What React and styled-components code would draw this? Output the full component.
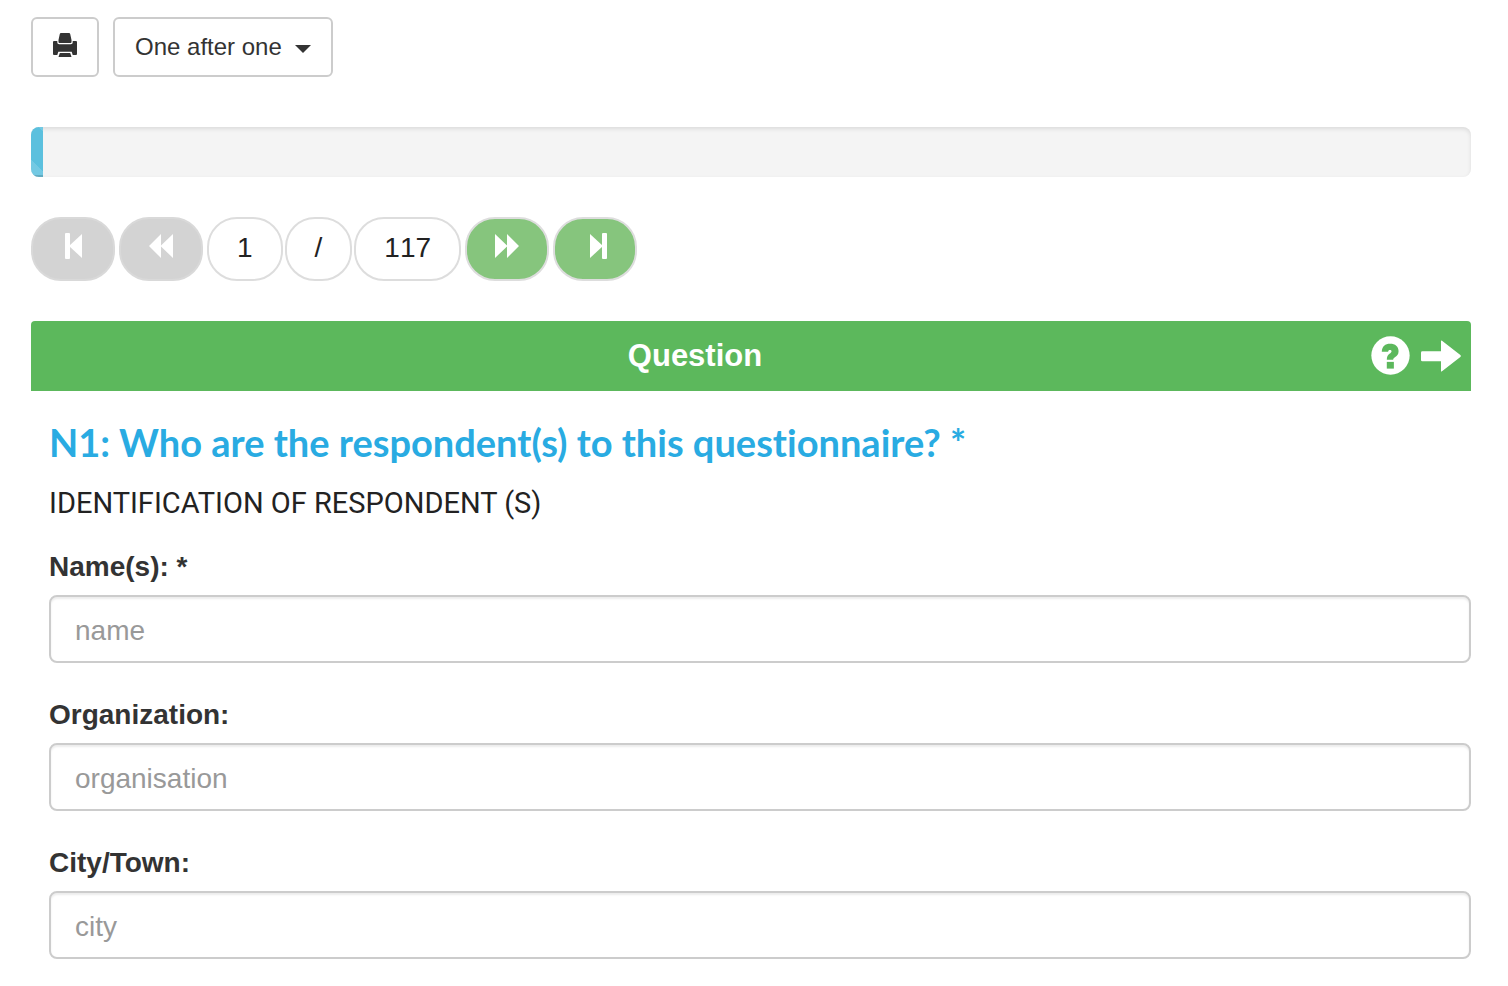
import React, { useState } from "react";
import styled, { createGlobalStyle } from "styled-components";

const GlobalStyle = createGlobalStyle`
  * {
    box-sizing: border-box;
  }

  body {
    margin: 0;
    background-color: #fff;
    color: #333;
    font-family: "Liberation Sans", Arial, sans-serif;
    font-size: 28px;
    line-height: 40px;
  }
`;

const Page = styled.main`
  padding: 17px 37px 27px 31px;
`;

const Toolbar = styled.div`
  display: flex;
  gap: 14px;
  margin-bottom: 50px;
`;

const ToolButton = styled.button`
  display: flex;
  align-items: center;
  justify-content: center;
  width: 68px;
  height: 60px;
  padding: 0;
  background-color: #fff;
  color: #333;
  border: 2px solid #ccc;
  border-radius: 6px;
  cursor: pointer;

  &:hover {
    background-color: #e6e6e6;
  }
`;

const ModeWrapper = styled.div`
  position: relative;
`;

const ModeSelect = styled.select`
  appearance: none;
  width: 220px;
  height: 60px;
  padding: 0 48px 2px 20px;
  background-color: #fff;
  color: #333;
  border: 2px solid #ccc;
  border-radius: 6px;
  font-family: inherit;
  font-size: 24px;
  cursor: pointer;
`;

const Caret = styled.svg`
  position: absolute;
  top: 28px;
  right: 22px;
  pointer-events: none;
`;

const Progress = styled.div`
  height: 50px;
  margin-bottom: 40px;
  overflow: hidden;
  background-color: #f4f4f4;
  border-radius: 8px;
  box-shadow: inset 0 2px 4px rgba(0, 0, 0, 0.1);
`;

const ProgressBar = styled.div`
  height: 100%;
  background-color: #5bc0de;
  background-image: linear-gradient(
    45deg,
    rgba(255, 255, 255, 0.15) 25%,
    transparent 25%,
    transparent 50%,
    rgba(255, 255, 255, 0.15) 50%,
    rgba(255, 255, 255, 0.15) 75%,
    transparent 75%
  );
  background-position: 0 -8px;
  background-size: 80px 80px;
  box-shadow: inset 0 -2px 0 rgba(0, 0, 0, 0.15);
`;

const Pager = styled.nav`
  display: flex;
  gap: 4px;
  margin-bottom: 40px;
`;

const PageCount = styled.div`
  display: flex;
  gap: 2px;
`;

const PageCell = styled.span`
  height: 64px;
  padding: 0 28px;
  color: #222;
  border: 2px solid #ddd;
  border-radius: 30px;
  font-kerning: none;
  line-height: 58px;
`;

const PageButton = styled.button`
  display: flex;
  align-items: center;
  justify-content: center;
  width: 84px;
  height: 64px;
  padding: 0;
  background-color: #86c57d;
  color: #fff;
  border: 2px solid #ddd;
  border-radius: 30px;
  cursor: pointer;

  &:disabled {
    background-color: #d3d3d3;
    border-color: #d9d9d9;
    cursor: not-allowed;
  }
`;

const PanelHeader = styled.header`
  display: flex;
  align-items: center;
  height: 70px;
  padding-bottom: 1px;
  background-color: #5cb85c;
  color: #fff;
  border-radius: 4px 4px 0 0;
`;

const PanelTitle = styled.h2`
  flex: 1;
  margin: 0;
  font-size: 31px;
  text-align: center;
`;

const PanelActions = styled.div`
  display: flex;
  align-items: center;
  gap: 11px;
  padding: 0 10px 0 12px;
`;

const PanelButton = styled.button`
  display: flex;
  padding: 0;
  background: none;
  color: inherit;
  border: none;
  cursor: pointer;
`;

const Question = styled.form`
  padding: 27px 0 0 18px;
`;

const QuestionTitle = styled.h3`
  margin: 0 0 15px;
  color: #29abe2;
  font-family: Lato, "Open Sans", sans-serif;
  font-size: 38px;
  font-variant-ligatures: none;
  font-weight: 700;
  line-height: 48px;
`;

const QuestionIntro = styled.p`
  margin: 0 0 22px;
  color: #222;
  font-family: Roboto, sans-serif;
  font-size: 29px;
  font-weight: 400;
  line-height: 44px;
`;

const Field = styled.div`
  margin-bottom: 32px;

  &:last-child {
    margin-bottom: 0;
  }
`;

const Label = styled.label`
  display: block;
  margin-bottom: 8px;
  font-weight: bold;
`;

const Input = styled.input`
  display: block;
  width: 100%;
  height: 68px;
  padding: 4px 24px 0;
  background-color: #fff;
  color: #555;
  border: 2px solid #ccc;
  border-radius: 8px;
  box-shadow: inset 0 2px 2px rgba(0, 0, 0, 0.075);
  font-family: inherit;
  font-size: 28px;

  &::placeholder {
    color: #999;
  }

  &:focus {
    border-color: #66afe9;
    outline: none;
  }
`;

const PrintIcon = () => (
  <svg width="24" height="28" viewBox="0 0 24 28" fill="currentColor" aria-hidden="true">
    <path d="M8 0h8q1 0 1.200 1L18.500 7v2q0 1-1 1h-11q-1 0-1-1V7L6.800 1Q7 0 8 0z" />
    <path d="M1 8h3.300v1.500q0 1.800 1.800 1.800h11.800q1.800 0 1.800-1.800V8H23q1 0 1 1v12q0 1-1 1h-3.300l-1-3.200H5.300l-1 3.200H1q-1 0-1-1V9q0-1 1-1z" />
    <path d="M6.800 20h10.400l1.300 4h-13z" />
  </svg>
);

const PagerIcon = ({ name }) => (
  <svg width="28" height="32" viewBox="0 0 28 32" fill="currentColor" aria-hidden="true">
    {name === "first" && (
      <>
        <rect x="6" y="0" width="5" height="26" rx="1" />
        <path d="M10 13 23 1v24z" />
      </>
    )}
    {name === "previous" && <path d="M2 13 14 1v11.500L26 1v24L14 13.500V25z" />}
    {name === "next" && <path d="M26 13 14 1v11.500L2 1v24l12-11.500V25z" />}
    {name === "last" && (
      <>
        <rect x="21" y="0" width="5" height="26" rx="1" />
        <path d="M22 13 9 1v24z" />
      </>
    )}
  </svg>
);

const HelpIcon = () => (
  <svg width="39" height="39" viewBox="0 0 116 116" aria-hidden="true">
    <circle cx="58" cy="58" r="57" fill="currentColor" />
    <g fill="#5cb85c">
      <path d="M32 47C33 30 42 23 57 23s25 8 25 22c0 10-5 14-11 18-4 3-5 4-5 8H47c0-10 3-14 8-18 4-3 6-5 6-7 0-3-2-4-5-4-3 0-5 2-5 5z" />
      <rect x="47" y="77" width="21" height="20" />
    </g>
  </svg>
);

const ArrowIcon = () => (
  <svg width="40" height="32" viewBox="0 0 120 96" fill="currentColor" aria-hidden="true">
    <path d="M4 34h56V3q0-3 3-1l55 43q3 3 0 6L63 94q-3 2-3-1V64H4q-4 0-4-4V38q0-4 4-4z" />
  </svg>
);

const TOTAL = 117;

const fields = [
  { id: "name", label: "Name(s): *", placeholder: "name", required: true },
  { id: "organisation", label: "Organization:", placeholder: "organisation" },
  { id: "city", label: "City/Town:", placeholder: "city" },
];

const App = () => {
  const [current, setCurrent] = useState(1);
  const [mode, setMode] = useState("one");

  const next = () => setCurrent(Math.min(TOTAL, current + 1));
  const isFirst = current === 1;
  const isLast = current === TOTAL;

  return (
    <>
      <GlobalStyle />
      <Page>
        <Toolbar>
          <ToolButton type="button" aria-label="Print" onClick={() => window.print()}>
            <PrintIcon />
          </ToolButton>
          <ModeWrapper>
            <ModeSelect
              aria-label="Display mode"
              value={mode}
              onChange={(e) => setMode(e.target.value)}
            >
              <option value="one">One after one</option>
              <option value="all">All</option>
            </ModeSelect>
            <Caret width="16" height="8" viewBox="0 0 16 8" fill="#333" aria-hidden="true">
              <path d="M0 0h16L8 8z" />
            </Caret>
          </ModeWrapper>
        </Toolbar>

        <Progress role="progressbar" aria-label="Progress" aria-valuenow={current} aria-valuemax={TOTAL}>
          <ProgressBar style={{ width: `${(current / TOTAL) * 100}%` }} />
        </Progress>

        <Pager aria-label="Questions">
          <PageButton type="button" aria-label="First" disabled={isFirst} onClick={() => setCurrent(1)}>
            <PagerIcon name="first" />
          </PageButton>
          <PageButton type="button" aria-label="Previous" disabled={isFirst} onClick={() => setCurrent(current - 1)}>
            <PagerIcon name="previous" />
          </PageButton>
          <PageCount>
            <PageCell>{current}</PageCell>
            <PageCell>/</PageCell>
            <PageCell>{TOTAL}</PageCell>
          </PageCount>
          <PageButton type="button" aria-label="Next" disabled={isLast} onClick={next}>
            <PagerIcon name="next" />
          </PageButton>
          <PageButton type="button" aria-label="Last" disabled={isLast} onClick={() => setCurrent(TOTAL)}>
            <PagerIcon name="last" />
          </PageButton>
        </Pager>

        <section>
          <PanelHeader>
            <PanelTitle>Question</PanelTitle>
            <PanelActions>
              <PanelButton type="button" aria-label="Help">
                <HelpIcon />
              </PanelButton>
              <PanelButton type="button" aria-label="Next question" onClick={next}>
                <ArrowIcon />
              </PanelButton>
            </PanelActions>
          </PanelHeader>

          <Question onSubmit={(e) => e.preventDefault()}>
            <QuestionTitle>N1: Who are the respondent(s) to this questionnaire? *</QuestionTitle>
            <QuestionIntro>IDENTIFICATION OF RESPONDENT (S)</QuestionIntro>
            {fields.map((field) => (
              <Field key={field.id}>
                <Label htmlFor={field.id}>{field.label}</Label>
                <Input
                  id={field.id}
                  type="text"
                  placeholder={field.placeholder}
                  required={field.required}
                />
              </Field>
            ))}
          </Question>
        </section>
      </Page>
    </>
  );
};

export default App;
